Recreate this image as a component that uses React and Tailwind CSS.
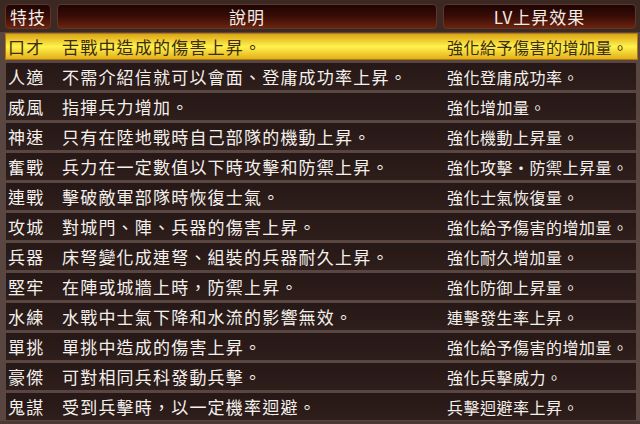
/*  ─────────────  skill table  ─────────────  */

const rows = [
  ["口才", "舌戰中造成的傷害上昇。", "強化給予傷害的增加量。"],
  ["人適", "不需介紹信就可以會面、登庸成功率上昇。", "強化登庸成功率。"],
  ["威風", "指揮兵力增加。", "強化增加量。"],
  ["神速", "只有在陸地戰時自己部隊的機動上昇。", "強化機動上昇量。"],
  ["奮戰", "兵力在一定數值以下時攻擊和防禦上昇。", "強化攻擊・防禦上昇量。"],
  ["連戰", "擊破敵軍部隊時恢復士氣。", "強化士氣恢復量。"],
  ["攻城", "對城門、陣、兵器的傷害上昇。", "強化給予傷害的增加量。"],
  ["兵器", "床弩變化成連弩、組裝的兵器耐久上昇。", "強化耐久增加量。"],
  ["堅牢", "在陣或城牆上時，防禦上昇。", "強化防御上昇量。"],
  ["水練", "水戰中士氣下降和水流的影響無效。", "連擊發生率上昇。"],
  ["單挑", "單挑中造成的傷害上昇。", "強化給予傷害的增加量。"],
  ["豪傑", "可對相同兵科發動兵擊。", "強化兵擊威力。"],
  ["鬼謀", "受到兵擊時，以一定機率迴避。", "兵擊迴避率上昇。"],
];

const font = {
  fontFamily: '"Noto Sans CJK TC", "Noto Sans CJK SC", sans-serif',
};

function HeadCell({ className, children }) {
  return (
    <div
      className={`flex h-[25px] items-center justify-center rounded-[4px] border border-[#5e362a] bg-gradient-to-b from-[#1c0604] via-[#3a0c06] to-[#6c2410] text-[17px] leading-none tracking-[1px] text-[#f2ebe4] ${className}`}
    >
      {children}
    </div>
  );
}

export default function App() {
  return (
    <div
      style={font}
      className="h-[424px] w-[640px] overflow-hidden bg-gradient-to-b from-[#3c2822] to-[#4c3832] pt-[4px]"
    >
      {/* header */}
      <div className="flex gap-[6px] pl-[5px] pr-[4px]">
        <HeadCell className="w-[46px]">特技</HeadCell>
        <HeadCell className="flex-1">說明</HeadCell>
        <HeadCell className="w-[193px]">LV上昇效果</HeadCell>
      </div>

      {/* rows */}
      <div className="mt-[3px] flex flex-col gap-[3px] bg-[#5a4640] py-[1px]">
        {rows.map(([name, desc, lv], i) => (
          <div
            key={name}
            className={
              i === 0
                ? "ml-[5px] mr-[2px] flex h-[27px] items-center border border-[#b07a10] bg-gradient-to-b from-[#dca412] via-[#fff24a] to-[#e2b016] text-[17px] leading-none text-[#3c2c12]"
                : "ml-[6px] mr-[4px] flex h-[27px] items-center bg-gradient-to-b from-[#261816] to-[#2e1e1c] text-[17px] leading-none text-[#f4f0ec]"
            }
          >
            <span className="w-[56px] shrink-0 pl-[2px] tracking-[1.3px]">{name}</span>
            <span className="w-[385px] shrink-0 whitespace-nowrap tracking-[1.2px]">{desc}</span>
            <span className="whitespace-nowrap text-[16px] tracking-[0.5px]">{lv}</span>
          </div>
        ))}
      </div>
    </div>
  );
}
